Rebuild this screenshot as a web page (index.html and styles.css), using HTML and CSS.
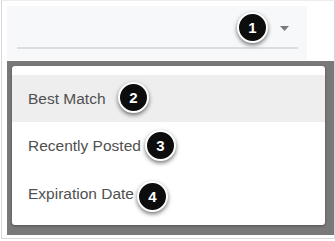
FILE: index.html
```html
<!DOCTYPE html>
<html lang="en">
<head>
    <meta charset="UTF-8">
    <meta name="viewport" content="width=device-width, initial-scale=1.0">
    <title>Sort Options</title>
    <link rel="stylesheet" href="styles.css">
</head>
<body>
    <div class="frame">
        <div class="field">
            <div class="field-row">
                <svg class="caret" width="9" height="5" viewBox="0 0 9 5"><path d="M0 0h9L4.5 5z" fill="#7b7b7b"/></svg>
            </div>
            <div class="field-line"></div>
        </div>

        <div class="menu-wrap">
            <ul class="menu">
                <li class="menu-item active">Best Match</li>
                <li class="menu-item">Recently Posted</li>
                <li class="menu-item">Expiration Date</li>
            </ul>
        </div>
    </div>

    <!-- step markers -->
    <span class="badge b1">1</span>
    <span class="badge b2">2</span>
    <span class="badge b3">3</span>
    <span class="badge b4">4</span>
</body>
</html>
```

FILE: styles.css
```css
body {
    margin: 0;
    padding: 0;
    background-color: #fff;
    font-family: "Liberation Sans", Arial, sans-serif;
    color: #505050;
}

.frame {
    box-sizing: border-box;
    width: 334px;
    height: 239px;
    margin-left: 1px;
    padding: 5px 0 0 5px;
    border: 1px solid #d8d8d8;
    border-top-color: #ececec;
}

.field {
    box-sizing: border-box;
    width: 300px;
    height: 54px;
    padding: 0 9px 0 10px;
    background-color: #f7f8fa;
}

.field-row {
    display: flex;
    justify-content: flex-end;
    align-items: center;
    height: 41px;
    padding-right: 9px;
}

.caret {
    display: block;
    margin-top: 3px;
}

.field-line {
    height: 2px;
    background-color: #dcdde0;
}

.menu-wrap {
    box-sizing: border-box;
    width: 327px;
    height: 174px;
    margin-top: 1px;
    padding: 5px 9px 10px 5px;
    background-color: #797979;
}

.menu {
    list-style: none;
    margin: 0;
    padding: 9px 0 7px;
    background-color: #fff;
    border-radius: 3px;
    box-shadow: 0 1px 3px rgba(0, 0, 0, 0.35);
}

.menu-item {
    display: flex;
    align-items: center;
    height: 48px;
    padding-left: 16px;
    font-size: 15.5px;
}

.menu-item.active {
    height: 47px;
    background-color: #eeeeee;
}

.badge {
    position: absolute;
    box-sizing: border-box;
    width: 31px;
    height: 31px;
    border: 2px solid #fff;
    border-radius: 50%;
    background-color: #0d0d0d;
    color: #fff;
    font-size: 15px;
    font-weight: bold;
    display: flex;
    align-items: center;
    justify-content: center;
    box-shadow: 0 2px 4px rgba(0, 0, 0, 0.55);
}

.b1 { left: 237px; top: 12px; }
.b2 { left: 118px; top: 82px; }
.b3 { left: 145px; top: 130px; }
.b4 { left: 137px; top: 181px; }
```
